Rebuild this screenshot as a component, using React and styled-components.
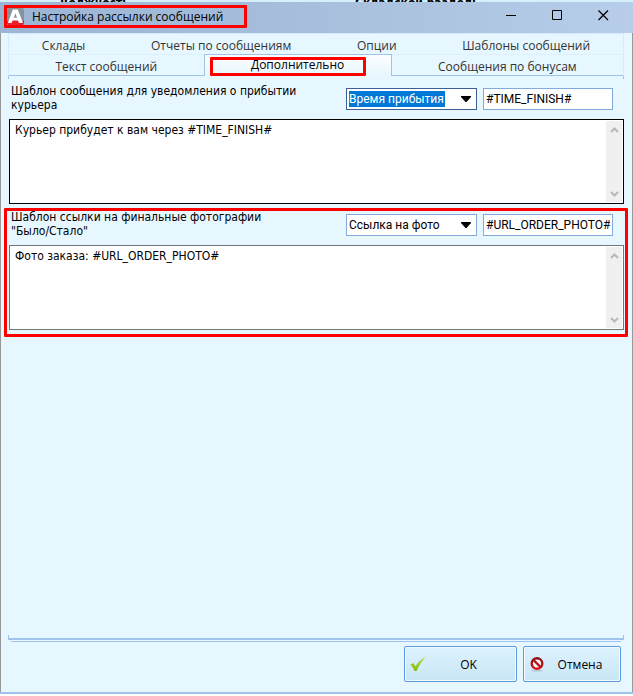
import { useId, useState } from "react";
import styled, { createGlobalStyle, css } from "styled-components";

const colors = {
  surface: "#e7f7ff",
  line: "#a0c3ec",
  softLine: "#d3ebfb",
  field: "#86a9dc",
  fieldActive: "#3f5f94",
  selection: "#0078d7",
  mark: "#fe0000",
};

const fonts = {
  ui: '"Open Sans", "Noto Sans", sans-serif',
  field: 'Roboto, "Noto Sans", sans-serif',
  form: '"DejaVu Sans Condensed", "DejaVu Sans", sans-serif',
};

const upperTabs = [
  "Склады",
  "Отчеты по сообщениям",
  "Опции",
  "Шаблоны сообщений",
];
const lowerTabs = ["Текст сообщений", "Дополнительно", "Сообщения по бонусам"];

const App = () => {
  const [tab, setTab] = useState("Дополнительно");

  return (
    <Page>
      <GlobalStyle />
      <Backdrop aria-hidden="true">
        <BackdropCell>Должность</BackdropCell>
        <BackdropCell>Складской раздел:</BackdropCell>
      </Backdrop>
      <Window>
        <TitleBar>
          <Title>
            <Logo />
            <TitleText>Настройка рассылки сообщений</TitleText>
            <TitleMark />
          </Title>
          <WindowButtons />
        </TitleBar>
        <Body>
          <Tabs role="tablist">
            <TabRow>
              {upperTabs.map((name) => (
                <Tab
                  key={name}
                  role="tab"
                  aria-selected={tab === name}
                  $active={tab === name}
                  onClick={() => setTab(name)}
                >
                  {name}
                </Tab>
              ))}
            </TabRow>
            <TabRow $lower>
              {lowerTabs.map((name) => (
                <Tab
                  key={name}
                  role="tab"
                  aria-selected={tab === name}
                  $active={tab === name}
                  $lower
                  onClick={() => setTab(name)}
                >
                  {name}
                  {name === "Дополнительно" && <TabMark />}
                </Tab>
              ))}
            </TabRow>
          </Tabs>
          <Panel role="tabpanel">
            <Template
              label="Шаблон сообщения для уведомления о прибытии курьера"
              options={["Время прибытия", "Ссылка на фото"]}
              code="#TIME_FINISH#"
              text="Курьер прибудет к вам через #TIME_FINISH#"
              active
            />
            <Template
              label={'Шаблон ссылки на финальные фотографии "Было/Стало"'}
              options={["Ссылка на фото", "Время прибытия"]}
              code="#URL_ORDER_PHOTO#"
              text="Фото заказа: #URL_ORDER_PHOTO#"
              marked
            />
          </Panel>
          <Footer>
            <ActionButton $wide>
              <CheckIcon />
              <span>OK</span>
            </ActionButton>
            <ActionButton>
              <StopIcon />
              <span>Отмена</span>
            </ActionButton>
          </Footer>
        </Body>
      </Window>
    </Page>
  );
};

export default App;

const Template = ({ label, options, code, text, active, marked }) => {
  const id = useId();

  return (
    <Section>
      <SectionHead>
        <Label htmlFor={id}>{label}</Label>
        <Combo>
          <Select aria-label={label} $active={active}>
            {options.map((option) => (
              <option key={option}>{option}</option>
            ))}
          </Select>
          <Arrow viewBox="0 0 10 6" aria-hidden="true">
            <path d="M0 0h10v1L5.5 6h-1L0 1z" />
          </Arrow>
        </Combo>
        <CodeInput aria-label="Код подстановки" defaultValue={code} />
      </SectionHead>
      <Editor $active={active}>
        <TextArea id={id} defaultValue={text} />
        <ScrollTrack>
          <ScrollButton aria-label="Вверх">
            <Chevron d="M1 6L4.5 2.5L8 6" />
          </ScrollButton>
          <ScrollButton aria-label="Вниз">
            <Chevron d="M1 2L4.5 5.5L8 2" />
          </ScrollButton>
        </ScrollTrack>
      </Editor>
      {marked && <SectionMark />}
    </Section>
  );
};

const Chevron = ({ d }) => (
  <svg width="9" height="8" viewBox="0 0 9 8" fill="none">
    <path d={d} stroke="#b9b9b9" strokeWidth="2.2" />
  </svg>
);

const Logo = () => (
  <svg width="17" height="17" viewBox="0 0 17 17" aria-hidden="true">
    <rect width="17" height="17" rx="2" fill="#87939b" />
    <path d="M0 13C4 11.500 12 11 17 13v2a2 2 0 0 1-2 2H2a2 2 0 0 1-2-2z" fill="#e8202c" />
    <path
      d="M5.800 1.500h5L16 15h-4l-1-2.500H5.600L4.600 15H.8zM8.400 5.300L6.800 9.800h3.200z"
      fill="#fff"
      fillRule="evenodd"
    />
  </svg>
);

const WindowButtons = () => (
  <Controls>
    <ControlButton aria-label="Свернуть">
      <svg width="11" height="11" viewBox="0 0 11 11" stroke="#000">
        <path d="M0 5.500h10" />
      </svg>
    </ControlButton>
    <ControlButton aria-label="Развернуть">
      <svg width="11" height="11" viewBox="0 0 11 11" stroke="#000" fill="none">
        <path d="M.5.5h9v9h-9z" />
      </svg>
    </ControlButton>
    <ControlButton aria-label="Закрыть">
      <svg width="11" height="11" viewBox="0 0 11 11" stroke="#000">
        <path d="M.5.5l9.500 9.500M10 .5L.5 10" strokeWidth="1.300" />
      </svg>
    </ControlButton>
  </Controls>
);

const CheckIcon = () => (
  <svg width="16" height="16" viewBox="0 0 16 16" aria-hidden="true">
    <defs>
      <linearGradient id="leaf" x1="0" y1="0" x2="0" y2="1">
        <stop offset="0" stopColor="#b9dd5a" />
        <stop offset="1" stopColor="#86bd0a" />
      </linearGradient>
    </defs>
    <path d="M.3 8.500L3.300 7l2.200 3.200C8 6.500 11.500 2.500 15.800.8 12.500 4.500 9 9.500 6.500 15H4.500C3.500 12.500 2 10.300.3 8.500z" fill="url(#leaf)" />
  </svg>
);

const StopIcon = () => (
  <svg width="16" height="16" viewBox="0 0 16 16" aria-hidden="true">
    <defs>
      <linearGradient id="stop" x1="0" y1="0" x2="0" y2="1">
        <stop offset="0" stopColor="#8c0d12" />
        <stop offset="1" stopColor="#d8121b" />
      </linearGradient>
    </defs>
    <ellipse cx="8" cy="14.700" rx="6" ry="1" fill="#b9cdd8" />
    <circle cx="8" cy="7.500" r="5.300" fill="#f6f9fb" stroke="url(#stop)" strokeWidth="2.400" />
    <path d="M4.500 4L11.500 11" stroke="#b51018" strokeWidth="2.400" />
  </svg>
);

const GlobalStyle = createGlobalStyle`
  * {
    box-sizing: border-box;
  }

  body {
    margin: 0;
    background-color: #fff;
    color: #000;
    font-family: ${fonts.ui};
    font-size: 12px;
  }

  button,
  input,
  select,
  textarea {
    margin: 0;
    border-radius: 0;
    outline: none;
    color: inherit;
    font: inherit;
  }

  svg {
    display: block;
    flex-shrink: 0;
  }
`;

const mark = css`
  position: absolute;
  border: 3px solid ${colors.mark};
  border-radius: 1px;
  pointer-events: none;
`;

const Page = styled.div`
  display: flex;
  flex-direction: column;
  min-height: 100vh;
  padding-bottom: 2px;
`;

const Backdrop = styled.div`
  display: grid;
  grid-template-columns: 296px 1fr;
  align-items: end;
  height: 2px;
  padding-left: 59px;
  overflow: hidden;
  background-color: #d5effc;
  font-family: ${fonts.form};
  font-weight: bold;
  line-height: 6px;
`;

const BackdropCell = styled.span`
  white-space: nowrap;
`;

const Window = styled.main`
  display: flex;
  flex: 1;
  flex-direction: column;
  border-bottom: 2px solid ${colors.line};
`;

const TitleBar = styled.header`
  display: flex;
  justify-content: space-between;
  height: 31px;
  padding-left: 4px;
  background: linear-gradient(to right, #9cb5d3, #a6bedb 45%, #b7cde9);
`;

const Title = styled.div`
  position: relative;
  display: flex;
  align-items: center;
  gap: 8px;
  height: 23px;
  margin-top: 3px;
  padding: 0 24px 0 3px;
`;

const TitleText = styled.h1`
  margin: 0;
  font-size: 12px;
  font-weight: normal;
  white-space: nowrap;
`;

const TitleMark = styled.span`
  ${mark}
  inset: 0;
`;

const Controls = styled.div`
  display: flex;
  padding-right: 7px;
`;

const ControlButton = styled.button`
  display: flex;
  align-items: center;
  justify-content: center;
  width: 46px;
  height: 26px;
  padding: 0;
  border: none;
  background: none;
`;

const Body = styled.div`
  display: flex;
  flex: 1;
  flex-direction: column;
  padding: 0 8px 10px 7px;
  border: 1px solid #9a9a9a;
  border-width: 0 1px;
  background-color: ${colors.surface};
`;

const Tabs = styled.div`
  border: 1px solid ${colors.softLine};
  border-bottom: none;
`;

const TabRow = styled.div`
  display: flex;
  height: ${({ $lower }) => ($lower ? "22px" : "20px")};
`;

const Tab = styled.button`
  position: relative;
  flex: 1 1 auto;
  padding: 3px 0 0;
  border: none;
  background: none;
  color: #333;
  line-height: 18px;
  white-space: nowrap;

  ${({ $lower }) =>
    $lower &&
    css`
      border-top: 1px solid #dcf1fd;
      border-bottom: 1px solid ${colors.line};
    `}

  ${({ $active }) =>
    $active &&
    css`
      padding: 0 0 2px;
      border: 1px solid ${colors.line};
      border-bottom: none;
      background: linear-gradient(#fbfeff, ${colors.surface});
      color: #000;
    `}
`;

const TabMark = styled.span`
  ${mark}
  inset: 2px 25px 0 5px;
`;

const Panel = styled.div`
  display: flex;
  flex: 1;
  flex-direction: column;
  gap: 6px;
  padding: 8px 0 8px 1px;
  border-bottom: 2px solid ${colors.line};
  background-image: linear-gradient(${colors.line}, ${colors.line}),
    linear-gradient(${colors.line}, ${colors.line}),
    linear-gradient(${colors.line}, ${colors.line}),
    linear-gradient(${colors.line}, ${colors.line});
  background-origin: padding-box;
  background-position: left top, right top, left bottom, right bottom;
  background-repeat: no-repeat;
  background-size: 1px 3px;
`;

const Section = styled.section`
  position: relative;
`;

const SectionHead = styled.div`
  display: flex;
  align-items: flex-start;
  gap: 6px;
  padding: 0 11px 7px 2px;
`;

const Label = styled.label`
  flex: 1;
  padding-right: 40px;
  font-family: ${fonts.form};
  font-size: 12px;
  line-height: 14px;
`;

const Combo = styled.div`
  display: grid;
  width: 131px;
  margin-top: 4px;
`;

const Select = styled.select`
  grid-area: 1 / 1;
  width: 100%;
  height: 22px;
  padding: 0 2px;
  border: 1px solid ${colors.field};
  appearance: none;
  background-color: #fff;
  font-family: ${fonts.field};

  ${({ $active }) =>
    $active &&
    css`
      border-color: ${colors.fieldActive};
      background-image: linear-gradient(${colors.selection}, ${colors.selection});
      background-position: 2px 2px;
      background-repeat: no-repeat;
      background-size: 96px 16px;
      color: #fff;
    `}

  option {
    color: #000;
  }
`;

const Arrow = styled.svg`
  grid-area: 1 / 1;
  align-self: center;
  justify-self: end;
  width: 10px;
  height: 6px;
  margin-right: 6px;
  pointer-events: none;
`;

const CodeInput = styled.input`
  width: 130px;
  height: 22px;
  margin-top: 4px;
  padding: 0 2px;
  border: 1px solid ${colors.field};
  background-color: #fff;
  font-family: ${fonts.field};
`;

const Editor = styled.div`
  display: flex;
  height: 85px;
  padding: 1px;
  border: 1px solid ${({ $active }) => ($active ? "#000" : "#70777c")};
  background-color: #fff;
`;

const TextArea = styled.textarea`
  flex: 1;
  min-width: 0;
  padding: 1px 4px;
  border: none;
  background: none;
  font-family: ${fonts.form};
  font-size: 12px;
  line-height: 16px;
  resize: none;
`;

const ScrollTrack = styled.div`
  display: flex;
  flex-direction: column;
  justify-content: space-between;
  width: 16px;
  background-color: #f0f0f0;
`;

const ScrollButton = styled.button`
  display: flex;
  align-items: center;
  justify-content: center;
  height: 17px;
  padding: 0;
  border: none;
  background: none;
`;

const SectionMark = styled.span`
  ${mark}
  inset: -2px -4px -7px -5px;
`;

const Footer = styled.footer`
  display: flex;
  justify-content: flex-end;
  gap: 6px;
  margin: 1px 3px 0;
  padding-top: 4px;
  border-top: 1px solid ${colors.line};
`;

const ActionButton = styled.button`
  display: flex;
  align-items: center;
  width: ${({ $wide }) => ($wide ? "113px" : "98px")};
  height: 36px;
  padding: 0 5px;
  border: 1px solid #5a9ae0;
  border-radius: 2px;
  background: linear-gradient(#ddf2fe, #c9e6f5);
  box-shadow: inset 0 0 0 1px #f4fbff;

  span {
    flex: 1;
  }
`;
